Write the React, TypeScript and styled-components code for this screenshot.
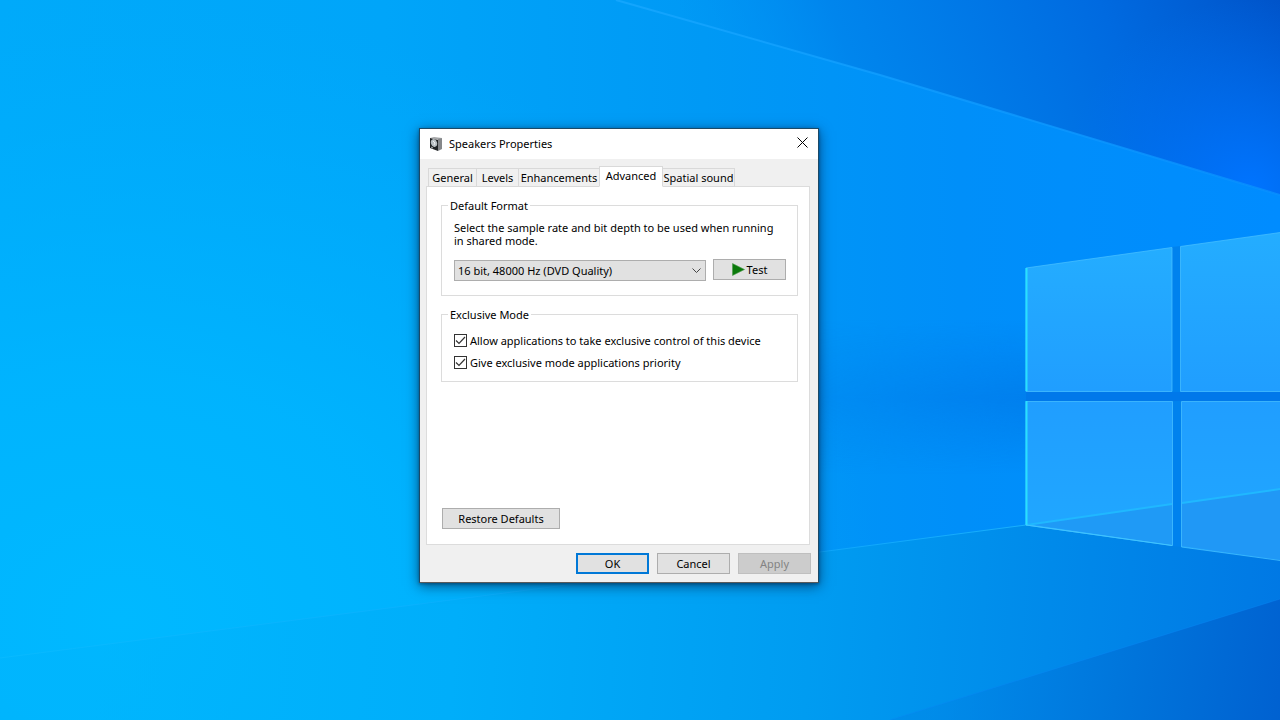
import React, { useState } from "react";
import styled, { createGlobalStyle } from "styled-components";

const GlobalStyle = createGlobalStyle`
  *, *::before, *::after { box-sizing: border-box; }
  body {
    margin: 0;
    background: #0096f5;
    color: #000;
    font: 11px/13px "Noto Sans", "Open Sans", sans-serif;
  }
  button, select, input { font: inherit; color: inherit; margin: 0; }
`;

const Desktop = styled.main`
  position: relative;
  min-height: 100vh;
  overflow: hidden;
`;

const WallpaperArt = styled.svg`
  position: absolute;
  inset: 0;
  width: 100%;
  height: 100%;
`;

const Dialog = styled.section`
  position: absolute;
  left: 419px;
  top: 128px;
  width: 400px;
  background: #f0f0f0;
  border: 1px solid #1c4966;
  border-bottom-color: #5a5a5a;
  box-shadow: 0 3px 12px rgba(0, 20, 50, 0.6), 0 1px 3px rgba(0, 20, 50, 0.4);
`;

const TitleBar = styled.header`
  display: flex;
  align-items: center;
  height: 30px;
  padding: 0 0 0 10px;
  gap: 6px;
  background: #fff;
`;

const Title = styled.h1`
  flex: 1;
  margin: 0;
  font-size: 11px;
  line-height: 16px;
  font-weight: 400;
`;

const CloseButton = styled.button`
  display: flex;
  align-items: center;
  justify-content: center;
  align-self: flex-start;
  width: 31px;
  height: 27px;
  padding: 0;
  border: 0;
  background: transparent;
`;

const TabArea = styled.div`
  padding: 7px 8px 0 6px;
`;

const TabList = styled.div`
  display: flex;
  align-items: flex-end;
  height: 21px;
  padding-left: 2px;
  margin-bottom: -1px;
`;

const Tab = styled.button<{ $active: boolean; $width: number }>`
  position: relative;
  z-index: ${(p) => (p.$active ? 1 : 0)};
  display: flex;
  justify-content: center;
  width: ${(p) => p.$width}px;
  height: ${(p) => (p.$active ? 21 : 19)}px;
  margin-right: -1px;
  padding: 1px 0 0;
  border: 1px solid #d9d9d9;
  border-bottom-color: ${(p) => (p.$active ? "#fff" : "#d9d9d9")};
  background: ${(p) => (p.$active ? "#fff" : "#f0f0f0")};
  line-height: 16px;
  white-space: nowrap;
`;

const Panel = styled.div`
  display: flex;
  flex-direction: column;
  align-items: stretch;
  gap: 12px;
  min-height: 359px;
  padding: 12px 11px 15px 14px;
  border: 1px solid #dcdcdc;
  background: #fff;
`;

const Group = styled.fieldset`
  min-width: 0;
  margin: 0;
  padding: 9px 11px 14px 12px;
  border: 1px solid #dcdcdc;
`;

const Legend = styled.legend`
  margin-left: -6px;
  padding: 0 2px;
`;

const Hint = styled.p`
  margin: 0 0 12px;
`;

const FormatRow = styled.div`
  display: flex;
  align-items: flex-start;
  gap: 7px;
`;

const SelectBox = styled.div`
  position: relative;
  flex: 1;
  padding-top: 1px;
`;

const FormatSelect = styled.select`
  display: block;
  appearance: none;
  width: 100%;
  height: 21px;
  padding: 0 20px 0 3px;
  border: 1px solid #adadad;
  border-radius: 0;
  background: #e1e1e1;
  line-height: 19px;
`;

const Chevron = styled.svg`
  position: absolute;
  top: 8px;
  right: 5px;
  pointer-events: none;
`;

const Button = styled.button<{ $primary?: boolean; $wide?: boolean }>`
  display: flex;
  align-items: center;
  justify-content: center;
  gap: 2px;
  width: ${(p) => (p.$wide ? 118 : 73)}px;
  height: 21px;
  padding: 0;
  border: ${(p) => (p.$primary ? "2px solid #0078d7" : "1px solid #adadad")};
  background: #e1e1e1;

  &:disabled {
    border-color: #bfbfbf;
    background: #ccc;
    color: #838383;
  }
`;

const OptionList = styled.div`
  display: grid;
  gap: 9px;
  padding: 4px 0 0;
  margin-bottom: -2px;
`;

const Option = styled.label`
  display: flex;
  align-items: center;
  gap: 3px;
`;

const TickBox = styled.span`
  display: grid;
  width: 13px;
  height: 13px;

  > * { grid-area: 1 / 1; }
  > svg { pointer-events: none; visibility: hidden; }
  > input:checked + svg { visibility: visible; }
`;

const TickInput = styled.input`
  appearance: none;
  width: 13px;
  height: 13px;
  border: 1px solid #333;
  background: #fff;
`;

const PanelFooter = styled.div`
  margin-top: auto;
  padding-left: 1px;
`;

const DialogFooter = styled.footer`
  display: flex;
  justify-content: flex-end;
  gap: 8px;
  padding: 8px 7px;
`;

function Wallpaper() {
  return (
    <WallpaperArt viewBox="0 0 1280 720" preserveAspectRatio="xMidYMid slice" aria-hidden="true">
      <defs>
        <linearGradient id="sky" x1="0" y1="0" x2="1" y2="0">
          <stop offset="0" stopColor="#00aafa" />
          <stop offset="0.3" stopColor="#00a5f9" />
          <stop offset="0.55" stopColor="#0099f5" />
          <stop offset="0.75" stopColor="#008ff9" />
          <stop offset="1" stopColor="#008cff" />
        </linearGradient>
        <radialGradient id="glow" gradientUnits="userSpaceOnUse" cx="0" cy="0" r="1" gradientTransform="translate(120 620) scale(760 620)">
          <stop offset="0" stopColor="#00b9ff" />
          <stop offset="0.4" stopColor="#00b6ff" stopOpacity="0.8" />
          <stop offset="1" stopColor="#00b0ff" stopOpacity="0" />
        </radialGradient>
        <linearGradient id="night" gradientUnits="userSpaceOnUse" x1="740" y1="160" x2="1260" y2="-50">
          <stop offset="0" stopColor="#0090f0" stopOpacity="0" />
          <stop offset="0.25" stopColor="#0084ec" stopOpacity="0.9" />
          <stop offset="0.7" stopColor="#006ae0" />
          <stop offset="1" stopColor="#0054ca" />
        </linearGradient>
        <radialGradient id="nightGlow" gradientUnits="userSpaceOnUse" cx="1250" cy="190" r="190">
          <stop offset="0" stopColor="#0074ff" />
          <stop offset="1" stopColor="#0070f4" stopOpacity="0" />
        </radialGradient>
        <linearGradient id="floor" gradientUnits="userSpaceOnUse" x1="100" y1="620" x2="1280" y2="700">
          <stop offset="0" stopColor="#00b4fc" stopOpacity="0.5" />
          <stop offset="0.3" stopColor="#00aefa" />
          <stop offset="0.6" stopColor="#009cf1" />
          <stop offset="0.8" stopColor="#008aea" />
          <stop offset="1" stopColor="#0078e4" />
        </linearGradient>
        <linearGradient id="corner" gradientUnits="userSpaceOnUse" x1="940" y1="670" x2="1290" y2="720">
          <stop offset="0" stopColor="#0082e4" stopOpacity="0.4" />
          <stop offset="0.5" stopColor="#0076dc" />
          <stop offset="1" stopColor="#0060d0" />
        </linearGradient>
        <linearGradient id="bandX" gradientUnits="userSpaceOnUse" x1="700" y1="0" x2="1280" y2="0">
          <stop offset="0" stopColor="#fff" stopOpacity="0" />
          <stop offset="1" stopColor="#fff" />
        </linearGradient>
        <mask id="bandMask">
          <rect x="700" y="300" width="580" height="200" fill="url(#bandX)" />
        </mask>
        <linearGradient id="band" x1="0" y1="0" x2="0" y2="1">
          <stop offset="0" stopColor="#0074e4" stopOpacity="0" />
          <stop offset="0.5" stopColor="#0074e4" />
          <stop offset="1" stopColor="#0074e4" stopOpacity="0" />
        </linearGradient>
        <linearGradient id="ray" x1="0" y1="0" x2="1" y2="0">
          <stop offset="0" stopColor="#10bcff" stopOpacity="0.5" />
          <stop offset="0.75" stopColor="#10a8ff" stopOpacity="0.7" />
          <stop offset="1" stopColor="#20b8ff" stopOpacity="0.8" />
        </linearGradient>
        <linearGradient id="beam" x1="0" y1="0" x2="1" y2="0">
          <stop offset="0" stopColor="#18a8ff" stopOpacity="0.8" />
          <stop offset="1" stopColor="#0890ff" stopOpacity="0.8" />
        </linearGradient>
        <linearGradient id="pane" x1="0" y1="0" x2="0" y2="1">
          <stop offset="0" stopColor="#24adff" />
          <stop offset="1" stopColor="#209eff" />
        </linearGradient>
        <linearGradient id="paneLow" x1="0" y1="0" x2="0" y2="1">
          <stop offset="0" stopColor="#209eff" />
          <stop offset="1" stopColor="#20a8ff" />
        </linearGradient>
      </defs>
      <rect width="1280" height="720" fill="url(#sky)" />
      <rect width="1280" height="720" fill="url(#glow)" />
      <path d="M616 0L880 75L1280 195V0Z" fill="url(#night)" />
      <path d="M616 0L880 75L1280 195V0Z" fill="url(#nightGlow)" />
      <path d="M616 0L880 75L1280 195" stroke="url(#beam)" strokeWidth="2" fill="none" />
      <rect x="700" y="320" width="580" height="154" fill="url(#band)" mask="url(#bandMask)" />
      <path d="M0 658L420 604L820 552L1026 525L1280 490V720H0Z" fill="url(#floor)" />
      <path d="M890 720L1280 599V720Z" fill="url(#corner)" />
      <path d="M890 720L1280 599" stroke="#0a88f4" strokeOpacity="0.4" fill="none" />
      <path d="M0 658L420 604L820 552L1026 525" stroke="url(#ray)" fill="none" />
      <path d="M1172 247L1181 246L1182 547L1172 546Z" fill="#0082ee" />
      <path d="M1026 392H1280V401H1026Z" fill="#0078ea" />
      <g stroke="#48c0ff" strokeOpacity="0.75">
        <path d="M1026 268L1172 247.500V391.500H1026Z" fill="url(#pane)" />
        <path d="M1180.500 246.500L1284 232V391.500H1180.500Z" fill="url(#pane)" />
        <path d="M1026 401.500H1172.500V545.500L1026 525Z" fill="url(#paneLow)" />
        <path d="M1181.500 401.500H1284V561L1181.500 547Z" fill="url(#paneLow)" />
      </g>
      <path d="M1028 524L1172 504V545Z" fill="#1f9af6" />
      <path d="M1182 503L1280 489V560L1182 546Z" fill="#2098f6" />
      <path d="M1026 525L1172 504M1182 503L1280 489" stroke="#20b8ff" strokeWidth="2" fill="none" />
      <path d="M1026.500 268V391M1026.500 401V525" stroke="#28e0ff" strokeWidth="2" fill="none" />
      <path d="M1026 525L1172 545.500" stroke="#40c4ff" fill="none" />
    </WallpaperArt>
  );
}

function SpeakerIcon() {
  return (
    <svg width="13" height="15" viewBox="0 0 13 15" aria-hidden="true">
      <path d="M0 1L4 0L12 1L9 3Z" fill="#a4a6a8" />
      <path d="M8 2L12 1V12L8 14Z" fill="#85878a" />
      <path d="M0 1L8 3V14L0 11Z" fill="#202325" />
      <ellipse cx="4" cy="6" rx="3" ry="4" fill="#b9c0c4" transform="rotate(-18 4 6)" />
      <path d="M3 4L5 6L4 8" stroke="#eef1f2" fill="none" />
      <path d="M1 10L3 11" stroke="#b9bdc0" />
    </svg>
  );
}

const TABS = [
  { name: "General", width: 49 },
  { name: "Levels", width: 43 },
  { name: "Enhancements", width: 82 },
  { name: "Advanced", width: 64 },
  { name: "Spatial sound", width: 73 },
];

const OPTIONS = [
  "Allow applications to take exclusive control of this device",
  "Give exclusive mode applications priority",
];

export default function App() {
  const [tab, setTab] = useState("Advanced");

  return (
    <Desktop>
      <GlobalStyle />
      <Wallpaper />
      <Dialog role="dialog" aria-labelledby="dialog-title">
        <TitleBar>
          <SpeakerIcon />
          <Title id="dialog-title">Speakers Properties</Title>
          <CloseButton type="button" aria-label="Close">
            <svg width="11" height="11" viewBox="0 0 11 11" aria-hidden="true">
              <path d="M0.500 0.500L10.500 10.500M10.500 0.500L0.500 10.500" stroke="#000" fill="none" />
            </svg>
          </CloseButton>
        </TitleBar>
        <TabArea>
          <TabList role="tablist">
            {TABS.map((t) => (
              <Tab
                key={t.name}
                type="button"
                role="tab"
                aria-selected={t.name === tab}
                $active={t.name === tab}
                $width={t.width}
                onClick={() => setTab(t.name)}
              >
                {t.name}
              </Tab>
            ))}
          </TabList>
          <Panel role="tabpanel" aria-label={tab}>
            <Group>
              <Legend>Default Format</Legend>
              <Hint id="format-hint">
                Select the sample rate and bit depth to be used when running
                <br />
                in shared mode.
              </Hint>
              <FormatRow>
                <SelectBox>
                  <FormatSelect aria-labelledby="format-hint">
                    <option>16 bit, 48000 Hz (DVD Quality)</option>
                  </FormatSelect>
                  <Chevron width="9" height="7" viewBox="0 0 9 7" aria-hidden="true">
                    <path d="M0.500 1.500L4.500 5.500L8.500 1.500" stroke="#444" fill="none" />
                  </Chevron>
                </SelectBox>
                <Button type="button">
                  <svg width="13" height="13" viewBox="0 0 13 13" aria-hidden="true">
                    <path d="M0.500 0.500L12.500 6.500L0.500 12.500Z" fill="#0b7a0b" stroke="#4f9a4f" strokeWidth="0.600" />
                  </svg>
                  Test
                </Button>
              </FormatRow>
            </Group>
            <Group>
              <Legend>Exclusive Mode</Legend>
              <OptionList>
                {OPTIONS.map((text) => (
                  <Option key={text}>
                    <TickBox>
                      <TickInput type="checkbox" defaultChecked />
                      <svg width="13" height="13" viewBox="0 0 13 13" aria-hidden="true">
                        <path d="M2 6.500L5 9.500L11 3" stroke="#333" strokeWidth="1.200" fill="none" />
                      </svg>
                    </TickBox>
                    {text}
                  </Option>
                ))}
              </OptionList>
            </Group>
            <PanelFooter>
              <Button type="button" $wide>
                Restore Defaults
              </Button>
            </PanelFooter>
          </Panel>
        </TabArea>
        <DialogFooter>
          <Button type="button" $primary>
            OK
          </Button>
          <Button type="button">Cancel</Button>
          <Button type="button" disabled>
            Apply
          </Button>
        </DialogFooter>
      </Dialog>
    </Desktop>
  );
}
